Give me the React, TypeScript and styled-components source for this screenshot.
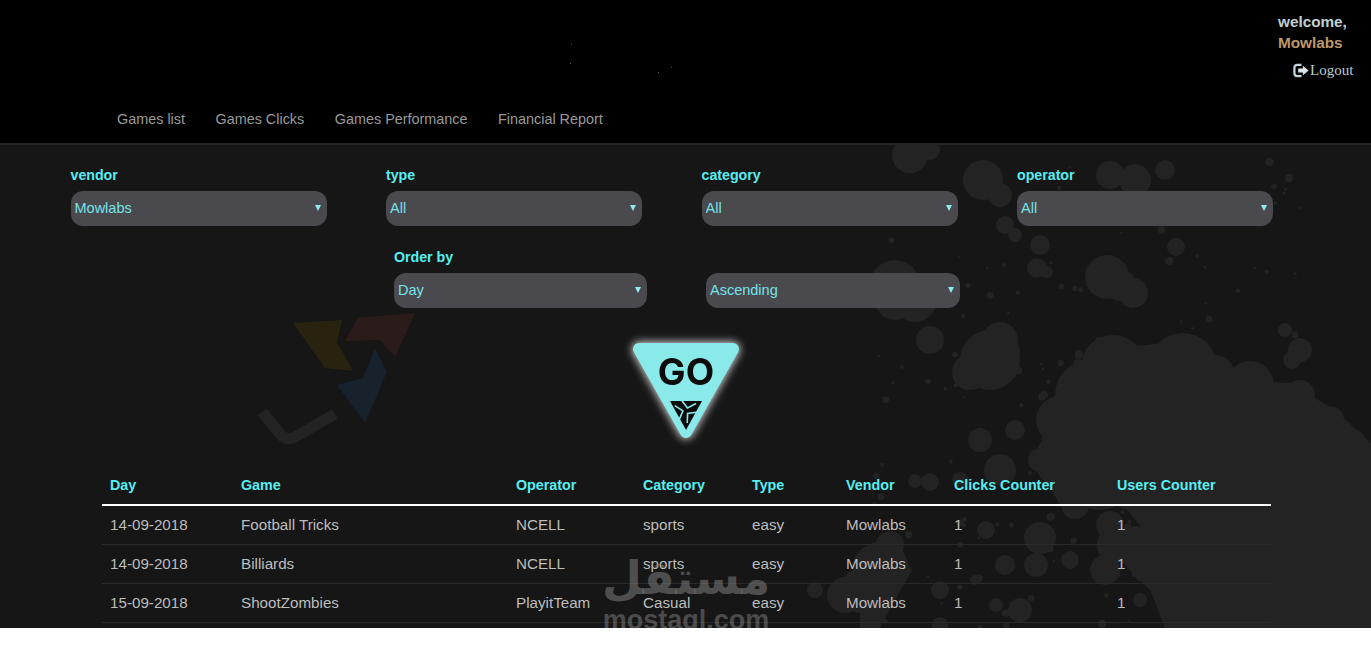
// App.tsx
import React from 'react';
import styled, { createGlobalStyle } from 'styled-components';

const GlobalStyle = createGlobalStyle`
    html, body {
        margin: 0;
        padding: 0;
        background: #fff;
    }
    body {
        font-family: "Liberation Sans", Arial, sans-serif;
    }
`;

const Page = styled.div`
    position: relative;
    width: 1371px;
    height: 628px;
    overflow: visible;
`;

const Frame = styled.div`
    display: flex;
    flex-direction: column;
    height: 628px;
    overflow: hidden;
    background: #000;
`;

const Header = styled.header`
    position: relative;
    flex-shrink: 0;
    height: 143px;
    box-sizing: border-box;
    display: flex;
    flex-direction: column;
    background: #000;
`;

const Specks = styled.svg`
    position: absolute;
    left: 560px;
    top: 40px;
`;

const UserBlock = styled.div`
    align-self: flex-end;
    width: 93px;
    padding-top: 11px;
    display: flex;
    flex-direction: column;
`;

const Welcome = styled.span<{ $tan?: boolean }>`
    font-size: 15.3px;
    font-weight: bold;
    line-height: 21px;
    color: ${({ $tan }) => ($tan ? '#bf9768' : '#c2cfd5')};
`;

const LogoutLink = styled.a`
    display: flex;
    align-items: center;
    margin-top: 7px;
    margin-left: 15px;
    height: 20px;
    font-family: "Liberation Serif", serif;
    font-size: 15px;
    color: #bccad2;
`;

const Nav = styled.nav`
    margin-top: auto;
    padding: 0 0 14px 117px;
    display: flex;
    gap: 30.5px;
`;

const NavLink = styled.a`
    font-size: 14.4px;
    line-height: 20px;
    color: #9a9a9a;
`;

const Main = styled.main`
    position: relative;
    flex: 1;
    min-height: 0;
    border-top: 2px solid #242424;
    background: #161616;
`;

const Backdrop = styled.svg`
    position: absolute;
    inset: 0;
    width: 1371px;
    height: 483px;
`;

const Content = styled.div`
    position: relative;
    display: flex;
    flex-direction: column;
`;

const FilterRow = styled.div`
    display: grid;
    grid-template-columns: repeat(4, 256px);
    column-gap: 59.5px;
    padding: 20px 0 0 70.5px;
`;

const OrderRow = styled.div`
    display: grid;
    grid-template-columns: 253px 254px;
    column-gap: 59px;
    align-items: end;
    padding: 21px 0 0 394px;
`;

const Field = styled.label`
    display: flex;
    flex-direction: column;
    gap: 6px;
`;

const FieldLabel = styled.span`
    font-size: 14.2px;
    font-weight: bold;
    line-height: 20px;
    color: #57eef2;
`;

const SelectBox = styled.div`
    position: relative;
    height: 35px;

    &::after {
        content: '';
        position: absolute;
        right: 6px;
        top: 14px;
        border-left: 3.5px solid transparent;
        border-right: 3.5px solid transparent;
        border-top: 6px solid #8eeaf0;
        pointer-events: none;
    }
`;

const Select = styled.select`
    appearance: none;
    width: 100%;
    height: 35px;
    padding: 0 0 1px 4px;
    border: 0;
    border-radius: 12px;
    background: #4a4a4e;
    font-family: "Liberation Sans", Arial, sans-serif;
    font-size: 14.5px;
    color: #74e2ea;
    outline: none;
`;

const GoRow = styled.div`
    display: flex;
    justify-content: center;
    margin-top: 25px;
`;

const GoButton = styled.button`
    width: 130px;
    height: 115px;
    padding: 0;
    border: 0;
    background: none;
    cursor: pointer;
`;

const GoGraphic = styled.svg`
    display: block;
    overflow: visible;
    filter: drop-shadow(0 0 4px rgba(255, 255, 255, 0.8)) drop-shadow(0 0 4px rgba(255, 255, 255, 0.3));
`;

const Table = styled.table`
    width: 1169px;
    margin: 18px 0 0 102px;
    border-collapse: collapse;
    table-layout: fixed;
`;

const HeadCell = styled.th<{ $width: number }>`
    width: ${({ $width }) => $width}px;
    height: 39px;
    box-sizing: border-box;
    padding: 0 0 0 8px;
    border-bottom: 2px solid #fff;
    font-size: 14.3px;
    font-weight: bold;
    text-align: left;
    color: #57eef2;
`;

const Cell = styled.td`
    height: 39px;
    box-sizing: border-box;
    padding: 0 0 0 8px;
    border-bottom: 1px solid #2a2a2a;
    font-size: 15.2px;
    color: #bdbdbd;
`;

const Watermark = styled.div`
    position: absolute;
    left: 603px;
    top: 548px;
    width: 166px;
    display: flex;
    flex-direction: column;
    align-items: center;
    color: rgba(128, 128, 128, 0.55);
    pointer-events: none;
`;

const WatermarkArabic = styled.span`
    font-family: "DejaVu Sans", sans-serif;
    font-size: 46px;
    font-weight: bold;
    line-height: 61px;
`;

const WatermarkLatin = styled.span`
    font-size: 27px;
    font-weight: bold;
    line-height: 22px;
    color: rgba(128, 128, 128, 0.5);
`;

const blobs: [number, number, number][] = [
    [983, 180, 20], [1000, 195, 12], [910, 155, 18], [930, 150, 10], [1110, 175, 14], [1135, 180, 16],
    [1165, 170, 10], [1040, 245, 10], [1005, 225, 9], [1015, 235, 7], [1107, 277, 22], [1133, 293, 15],
    [1120, 285, 16], [1037, 268, 10], [1176, 247, 9], [1047, 272, 6], [990, 360, 30], [970, 372, 18],
    [1000, 340, 18], [1010, 350, 10], [930, 340, 14], [895, 285, 25], [915, 300, 22], [895, 300, 20],
    [1113, 367, 32], [1183, 367, 34], [1150, 385, 30], [1090, 395, 35], [1060, 420, 24], [1300, 350, 12],
    [1285, 330, 7], [1292, 360, 9], [980, 440, 12], [1015, 430, 10], [1040, 460, 12], [1000, 470, 16],
    [960, 480, 8], [930, 482, 9], [915, 481, 7], [1075, 505, 14], [1110, 525, 14], [1040, 538, 16],
    [1036, 565, 12], [986, 530, 9], [1005, 565, 10], [1070, 560, 9], [1105, 570, 15], [1115, 545, 18],
    [1135, 540, 14], [940, 590, 9], [1020, 610, 12], [940, 625, 8], [880, 570, 28], [865, 590, 24],
    [890, 545, 14], [845, 595, 18], [815, 590, 8], [1065, 460, 30], [1100, 470, 40], [1130, 490, 20],
    [1080, 440, 38], [1170, 590, 10], [1140, 600, 7], [975, 580, 5], [996, 605, 7],
    [1250, 385, 24], [1300, 395, 15], [1330, 420, 14], [1355, 440, 10], [1215, 375, 20]
];

// seeded so the droplets stay in the same place on every render
const seeded = (seed: number) => () => {
    seed = (seed * 16807) % 2147483647;
    return seed / 2147483647;
};

const rand = seeded(4711);
const droplets = Array.from({ length: 170 }, () => ({
    x: 860 + rand() * 440,
    y: 160 + rand() * 468,
    r: 1 + rand() * 3.4,
}));

const columns: [string, number][] = [
    ['Day', 131], ['Game', 275], ['Operator', 127], ['Category', 109],
    ['Type', 94], ['Vendor', 108], ['Clicks Counter', 163], ['Users Counter', 162],
];

const rows = [
    ['14-09-2018', 'Football Tricks', 'NCELL', 'sports', 'easy', 'Mowlabs', '1', '1'],
    ['14-09-2018', 'Billiards', 'NCELL', 'sports', 'easy', 'Mowlabs', '1', '1'],
    ['15-09-2018', 'ShootZombies', 'PlayitTeam', 'Casual', 'easy', 'Mowlabs', '1', '1'],
    ['', '', '', '', '', '', '', ''],
];

const filters = [
    { label: 'vendor', value: 'Mowlabs' },
    { label: 'type', value: 'All' },
    { label: 'category', value: 'All' },
    { label: 'operator', value: 'All' },
];

const navItems = ['Games list', 'Games Clicks', 'Games Performance', 'Financial Report'];

const LogoutIcon = () => (
    <svg width="17" height="15" viewBox="0 0 18 15" aria-hidden="true">
        <path d="M9 1.5H4.500A3 3 0 0 0 1.500 4.500v6a3 3 0 0 0 3 3H9" fill="none" stroke="#c4d4dc" strokeWidth="2.4" />
        <path d="M5.500 5.500h5V2.600L16.500 7.500l-6 4.900V9.500h-5z" fill="#dbe6ea" />
    </svg>
);

const Splatter = () => (
    <Backdrop viewBox="0 145 1371 483" aria-hidden="true">
        <g fill="#232323">
            {blobs.map(([x, y, r]) => (
                <circle key={`${x}-${y}`} cx={x} cy={y} r={r} />
            ))}
            {droplets.map((d, i) => (
                <circle key={i} cx={d.x} cy={d.y} r={d.r} />
            ))}
            <path d="M1165 628L1150 590 1120 560 1143 530 1120 500 1060 505 1040 470 1050 400 1100 350 1190 340 1230 380 1290 383 1335 410 1371 443V628z" />
            <path d="M860 628V552L900 545 912 570 895 600 880 628z" />
        </g>
        <polygon points="293,323 342,320 337,342 353,371 325,368" fill="#27230f" />
        <polygon points="345,341 358,318 415,313 395,357 380,340" fill="#2c1b1b" />
        <polygon points="375,348 387,372 365,423 337,385 363,378" fill="#17222d" />
        <path d="M262 412L282 436Q287 441 295 437L335 414" fill="none" stroke="#232323" strokeWidth="11" />
    </Backdrop>
);

const GoShape = () => (
    <GoGraphic width="130" height="115" viewBox="0 0 130 115" aria-hidden="true">
        <polygon
            points="18,16 112,16 65,99"
            fill="#8aeaea"
            stroke="#8aeaea"
            strokeWidth="12"
            strokeLinejoin="round"
        />
        <text
            x="65"
            y="52"
            textAnchor="middle"
            fontFamily="Inter, sans-serif"
            fontSize="37"
            fontWeight="700"
            fill="#0b0b0b"
        >
            GO
        </text>
        <polygon points="49,68 81,68 65,97" fill="#0b0b0b" />
        {[0, 120, 240].map((angle) => (
            <polyline
                key={angle}
                points="60,66.500 66.500,75 75,70.500"
                fill="none"
                stroke="#8aeaea"
                strokeWidth="1.6"
                transform={`rotate(${angle} 65 77.700)`}
            />
        ))}
    </GoGraphic>
);

const App: React.FC = () => (
    <>
        <GlobalStyle />
        <Page>
            <Frame>
                <Header>
                    <Specks width="120" height="40" viewBox="0 0 120 40" aria-hidden="true">
                        <g fill="#555">
                            <rect x="11" y="4" width="1" height="1" />
                            <rect x="10" y="23" width="1" height="1" />
                            <rect x="98" y="32" width="1" height="1" />
                            <rect x="111" y="27" width="1" height="1" />
                        </g>
                    </Specks>
                    <UserBlock>
                        <Welcome>welcome,</Welcome>
                        <Welcome $tan>Mowlabs</Welcome>
                        <LogoutLink>
                            <LogoutIcon />
                            Logout
                        </LogoutLink>
                    </UserBlock>
                    <Nav>
                        {navItems.map((item) => (
                            <NavLink key={item}>{item}</NavLink>
                        ))}
                    </Nav>
                </Header>
                <Main>
                    <Splatter />
                    <Content>
                        <FilterRow>
                            {filters.map((filter) => (
                                <Field key={filter.label}>
                                    <FieldLabel>{filter.label}</FieldLabel>
                                    <SelectBox>
                                        <Select defaultValue={filter.value}>
                                            <option>{filter.value}</option>
                                        </Select>
                                    </SelectBox>
                                </Field>
                            ))}
                        </FilterRow>
                        <OrderRow>
                            <Field>
                                <FieldLabel>Order by</FieldLabel>
                                <SelectBox>
                                    <Select defaultValue="Day">
                                        <option>Day</option>
                                    </Select>
                                </SelectBox>
                            </Field>
                            <Field>
                                <SelectBox>
                                    <Select defaultValue="Ascending">
                                        <option>Ascending</option>
                                    </Select>
                                </SelectBox>
                            </Field>
                        </OrderRow>
                        <GoRow>
                            <GoButton type="button" aria-label="GO">
                                <GoShape />
                            </GoButton>
                        </GoRow>
                        <Table>
                            <thead>
                                <tr>
                                    {columns.map(([name, width]) => (
                                        <HeadCell key={name} $width={width}>{name}</HeadCell>
                                    ))}
                                </tr>
                            </thead>
                            <tbody>
                                {rows.map((row, i) => (
                                    <tr key={i}>
                                        {row.map((value, j) => (
                                            <Cell key={j}>{value}</Cell>
                                        ))}
                                    </tr>
                                ))}
                            </tbody>
                        </Table>
                    </Content>
                </Main>
            </Frame>
            <Watermark>
                <WatermarkArabic>مستقل</WatermarkArabic>
                <WatermarkLatin>mostaql.com</WatermarkLatin>
            </Watermark>
        </Page>
    </>
);

export default App;
